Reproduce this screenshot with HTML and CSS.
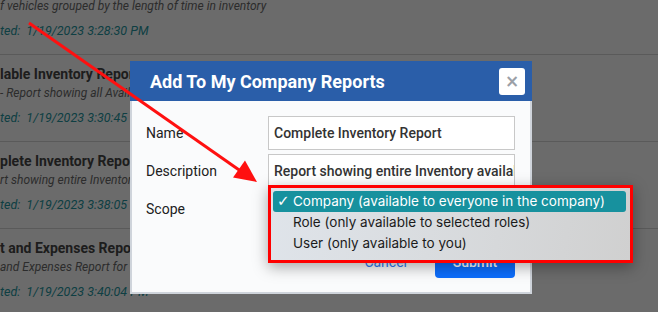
FILE: index.html
```html
<!DOCTYPE html>
<html>
<head>
<meta charset="utf-8">
<link rel="stylesheet" href="styles.css">
</head>
<body>
<div class="page">
  <ul class="report-list">
    <li class="report">
      <div class="report-title">ventory Aging Report</div>
      <div class="report-desc">f vehicles grouped by the length of time in inventory</div>
      <div class="report-date">ted:  1/19/2023 3:28:30 PM</div>
    </li>
    <li class="report">
      <div class="report-title">lable Inventory Report</div>
      <div class="report-desc">- Report showing all Available Inventory</div>
      <div class="report-date">ted:  1/19/2023 3:30:45 PM</div>
    </li>
    <li class="report">
      <div class="report-title">plete Inventory Report</div>
      <div class="report-desc">rt showing entire Inventory available</div>
      <div class="report-date">ted:  1/19/2023 3:38:05 PM</div>
    </li>
    <li class="report">
      <div class="report-title">t and Expenses Report</div>
      <div class="report-desc">and Expenses Report for the dealership</div>
      <div class="report-date">ted:  1/19/2023 3:40:04 PM</div>
    </li>
  </ul>
</div>
<div class="backdrop"></div>

<div class="modal">
  <div class="modal-header">
    <h1 class="modal-title">Add To My Company Reports</h1>
    <button class="close-btn" type="button">&times;</button>
  </div>
  <div class="modal-body">
    <div class="form-row">
      <label class="form-label">Name</label>
      <div class="input">Complete Inventory Report</div>
    </div>
    <div class="form-row">
      <label class="form-label">Description</label>
      <div class="input">Report showing entire Inventory available</div>
    </div>
    <div class="form-row">
      <label class="form-label">Scope</label>
      <div class="input select"></div>
    </div>
    <div class="actions">
      <button class="btn-link" type="button">Cancel</button>
      <button class="btn-primary" type="button">Submit</button>
    </div>
  </div>
</div>

<div class="dropdown">
  <div class="option selected"><span class="check">✓</span>Company (available to everyone in the company)</div>
  <div class="option"><span class="check"></span>Role (only available to selected roles)</div>
  <div class="option"><span class="check"></span>User (only available to you)</div>
</div>

<svg class="annotation" width="658" height="312" viewBox="0 0 658 312">
  <line x1="29" y1="23" x2="242" y2="172" stroke="#ff1010" stroke-width="3"/>
  <polygon points="257,182 233,177.5 245,160.5" fill="#ff1010"/>
</svg>
</body>
</html>
```

FILE: styles.css
```css
html, body {
  margin: 0;
  padding: 0;
  width: 658px;
  height: 312px;
  overflow: hidden;
  background: #ffffff;
  font-family: Roboto, "Liberation Sans", sans-serif;
}

.page {
  width: 658px;
  height: 312px;
  overflow: hidden;
}

.report-list {
  list-style: none;
  margin: -32px 0 0 0;
  padding: 0;
}

.report {
  border-bottom: 1px solid #d6d6d6;
  padding: 9px 0 13px 0;
  height: 64px;
}

.report-title {
  font-size: 14px;
  font-weight: 700;
  line-height: 20px;
  color: #474747;
  white-space: nowrap;
}

.report-desc {
  font-size: 12px;
  font-style: italic;
  line-height: 18px;
  color: #6a6a6a;
  white-space: nowrap;
}

.report-date {
  margin-top: 6px;
  font-size: 12.5px;
  font-style: italic;
  line-height: 20px;
  color: #2496a0;
  white-space: pre;
}

.backdrop {
  position: absolute;
  inset: 0;
  background: rgba(0, 0, 0, 0.58);
}

.modal {
  position: absolute;
  left: 130px;
  top: 61px;
  width: 402px;
  height: 233px;
  display: flex;
  flex-direction: column;
}

.modal-header {
  height: 40px;
  background: #2a5ea9;
  display: flex;
  align-items: center;
  justify-content: space-between;
  padding: 0 7px 0 20px;
}

.modal-title {
  margin: 0;
  font-size: 18px;
  font-weight: 700;
  color: #ffffff;
}

.close-btn {
  width: 26px;
  height: 27px;
  border: none;
  border-radius: 3px;
  background: #ffffff;
  color: #9ba0a7;
  font-family: "DejaVu Sans", sans-serif;
  font-size: 17px;
  font-weight: 700;
  line-height: 27px;
  padding: 0;
  text-align: center;
}

.modal-body {
  flex: 1;
  background: #fafbfc;
  border: 2px solid #cfd4db;
  border-top: none;
  padding: 15px 15px 0 14px;
  display: flex;
  flex-direction: column;
  gap: 4px;
}

.form-row {
  display: flex;
  align-items: center;
}

.form-label {
  width: 122px;
  font-size: 14px;
  color: #212121;
}

.input {
  width: 240px;
  height: 32px;
  box-sizing: content-box;
  border: 1px solid #c8c8c8;
  background: #ffffff;
  padding: 0 0 0 5px;
  font-size: 14px;
  font-weight: 500;
  color: #333333;
  line-height: 32px;
  white-space: nowrap;
  overflow: hidden;
}

.actions {
  display: flex;
  justify-content: flex-end;
  align-items: center;
  gap: 28px;
  margin-top: 16px;
}

.btn-link {
  border: none;
  background: none;
  color: #2f7bf5;
  font-family: Roboto, sans-serif;
  font-size: 14px;
  padding: 0;
}

.btn-primary {
  width: 80px;
  height: 32px;
  border: none;
  border-radius: 4px;
  background: #0d6efd;
  color: #ffffff;
  font-family: Roboto, sans-serif;
  font-size: 14px;
  font-weight: 500;
}

.dropdown {
  position: absolute;
  left: 268px;
  top: 185px;
  width: 353px;
  height: 69px;
  border: 3px solid #ff0000;
  background: linear-gradient(100deg, #dfe4ea 0%, #d9dcdf 45%, #d0d0d0 100%);
  box-shadow: 0 4px 14px rgba(0, 0, 0, 0.35);
  padding: 3px 4px 0 2px;
  box-sizing: content-box;
  font-family: Inter, "Liberation Sans", sans-serif;
  font-size: 13.5px;
}

.option {
  height: 21px;
  line-height: 21px;
  color: #1b1b1b;
  display: flex;
  white-space: nowrap;
}

.option.selected {
  background: #17919e;
  color: #ffffff;
  border-radius: 3px;
}

.check {
  width: 16px;
  padding-left: 4px;
  flex: none;
  font-family: "DejaVu Sans", sans-serif;
  font-size: 15px;
}

.annotation {
  position: absolute;
  left: 0;
  top: 0;
}
```
